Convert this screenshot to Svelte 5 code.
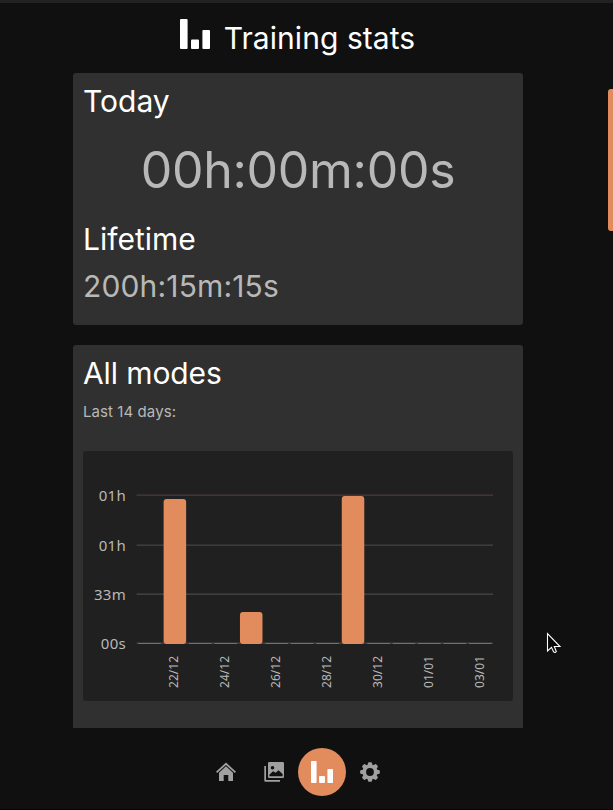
<script>
  // --- Data ---
  const today = '00h:00m:00s';
  const lifetime = '200h:15m:15s';

  // bar heights in chart px, one per day
  const days = [
    { date: '21/12', height: 0 },
    { date: '22/12', height: 145 },
    { date: '23/12', height: 0 },
    { date: '24/12', height: 0 },
    { date: '25/12', height: 32 },
    { date: '26/12', height: 0 },
    { date: '27/12', height: 0 },
    { date: '28/12', height: 0 },
    { date: '29/12', height: 148 },
    { date: '30/12', height: 0 },
    { date: '31/12', height: 0 },
    { date: '01/01', height: 0 },
    { date: '02/01', height: 0 },
    { date: '03/01', height: 0 }
  ];

  const ticks = [
    { label: '01h', y: 44, color: '#4b3a38' },
    { label: '01h', y: 94, color: '#46433f' },
    { label: '33m', y: 143, color: '#4a4744' },
    { label: '00s', y: 192, color: '#484848' }
  ];

  // --- Chart layout ---
  const left = 53.7;
  const step = 25.45;
  const baseline = 193;
  const barWidth = 22.5;

  const center = (i) => left + step * (i + 0.5);

  let page = $state('stats');
</script>

{#snippet bars()}
  <rect x="0" y="0" width="7.6" height="30" rx="1" />
  <rect x="11" y="20.5" width="8" height="9.5" rx="1" />
  <rect x="22.4" y="11" width="7.6" height="19" rx="1" />
{/snippet}

<div class="app">
  <main>
    <h1>
      <svg width="30" height="30" viewBox="0 0 30 30">{@render bars()}</svg>
      <span>Training stats</span>
    </h1>

    <section class="card totals">
      <h2>Today</h2>
      <div class="today">{today}</div>
      <h2>Lifetime</h2>
      <div class="lifetime">{lifetime}</div>
    </section>

    <section class="card modes">
      <h2>All modes</h2>
      <p>Last 14 days:</p>
      <svg class="chart" width="430" height="250" viewBox="0 0 430 250">
        {#each ticks as tick}
          <rect x="53.6" y={tick.y - 0.5} width="356.4" height="1.3" fill={tick.color} />
          <text class="tick" x="43" y={tick.y + 6} text-anchor="end">{tick.label}</text>
        {/each}
        {#each days as day, i}
          {#if day.height}
            <rect
              class="bar"
              x={center(i) - barWidth / 2}
              y={baseline - day.height}
              width={barWidth}
              height={day.height}
              rx="3"
            />
          {:else}
            <rect class="empty" x={center(i) - barWidth / 2} y={baseline - 1} width={barWidth} height="1" />
          {/if}
          {#if i % 2 === 1}
            <text class="date" transform="translate({center(i) + 3.5} 205) rotate(-90)" text-anchor="end">{day.date}</text>
          {/if}
        {/each}
      </svg>
    </section>
  </main>

  <nav>
    <button class:active={page === 'home'} onclick={() => (page = 'home')} aria-label="Home">
      <svg width="20" height="20" viewBox="0 0 20 20">
        <path d="M10 0.5 0 9.8 1.2 11 10 2.9 18.8 11 20 9.8Z" />
        <path d="M10 4.3 3 10.8V19H7.7V13H12.3V19H17V10.8Z" />
      </svg>
    </button>
    <button class:active={page === 'gallery'} onclick={() => (page = 'gallery')} aria-label="Gallery">
      <svg width="20" height="20" viewBox="0 0 20 20">
        <path d="M0.3 4H2V18H16V19.7H1.5Q0.3 19.7 0.3 18.5Z" />
        <path
          fill-rule="evenodd"
          d="M5.2 0H18.8Q20 0 20 1.2V14.8Q20 16 18.8 16H5.2Q4 16 4 14.8V1.2Q4 0 5.2 0ZM5.4 14.3H18.6V12L14.5 8.2 11.7 10.8 9 9.2 5.4 12.8ZM8.5 4A1.8 1.8 0 1 0 8.5 7.6 1.8 1.8 0 1 0 8.5 4Z"
        />
      </svg>
    </button>
    <button class:active={page === 'stats'} onclick={() => (page = 'stats')} aria-label="Stats">
      <svg width="22" height="22" viewBox="0 0 30 30">{@render bars()}</svg>
    </button>
    <button class:active={page === 'settings'} onclick={() => (page = 'settings')} aria-label="Settings">
      <svg width="20" height="20" viewBox="0 0 20 20">
        <g>
          {#each [0, 45, 90, 135] as angle}
            <rect x="7.9" y="0.2" width="4.2" height="19.6" rx="1.3" transform="rotate({angle} 10 10)" />
          {/each}
          <circle cx="10" cy="10" r="7.7" />
        </g>
        <circle class="hole" cx="10" cy="10" r="3.9" />
      </svg>
    </button>
  </nav>

  <div class="scrollbar"></div>

  <svg class="cursor" width="16" height="24" viewBox="0 0 16 24">
    <path d="M1.5 1.5V19L5.5 15.3 7.5 19.7Q9 21.5 10.3 19.5L8.3 14.5H14Z" />
  </svg>
</div>

<style>
  :global(body) {
    background: #101010;
  }
  .app {
    position: relative;
    display: flex;
    flex-direction: column;
    box-sizing: border-box;
    height: 810px;
    overflow: hidden;
    background: #101010;
    border-top: 3px solid #222;
    border-bottom: 1px solid #060606;
    color: #fff;
    font-family: Inter, sans-serif;
  }
  main {
    height: 725px;
    overflow: hidden;
    padding: 0 90px 0 73px;
  }
  h1, h2 {
    margin: 0;
    font-size: 30px;
    font-weight: 400;
    line-height: 36px;
  }
  h1 {
    display: flex;
    justify-content: center;
    gap: 14px;
    height: 53px;
    padding: 17px 1px 0 0;
    fill: #fff;
    letter-spacing: 0.06px;
  }
  h1 svg {
    margin-top: -1px;
  }
  .card {
    box-sizing: border-box;
    padding: 10px;
    background: #303030;
    border-radius: 3px;
  }
  .totals {
    height: 252px;
    margin-bottom: 20px;
  }
  .today {
    padding: 21px 0;
    color: #b8b8b8;
    font-size: 50px;
    line-height: 60px;
    letter-spacing: -0.3px;
    text-align: center;
  }
  .lifetime {
    margin-top: 11px;
    color: #b8b8b8;
    font-size: 30px;
    line-height: 36px;
    letter-spacing: 0.15px;
  }
  .modes {
    height: 420px;
  }
  .modes h2 {
    letter-spacing: -0.1px;
  }
  .modes p {
    margin: 11px 0 29px;
    color: #b8b8b8;
    font-size: 15px;
    line-height: 20px;
    letter-spacing: 0.08px;
  }
  .chart {
    display: block;
    background: #202020;
    border-radius: 3px;
  }
  .bar {
    fill: #e28c5e;
  }
  .empty {
    fill: #8a6a54;
  }
  .tick {
    fill: #b8b8b8;
    font: 15px 'Noto Sans', sans-serif;
    letter-spacing: 0.3px;
  }
  .date {
    fill: #b8b8b8;
    font: 12px 'Noto Sans', sans-serif;
  }
  nav {
    display: flex;
    justify-content: center;
    padding: 20px 17px 0 0;
  }
  button {
    display: flex;
    align-items: center;
    justify-content: center;
    width: 48px;
    height: 48px;
    padding: 0;
    background: none;
    border: none;
    border-radius: 50%;
    fill: #a0a0a0;
  }
  button.active {
    background: #e28c5e;
    fill: #fff;
  }
  .hole {
    fill: #101010;
  }
  .scrollbar {
    position: absolute;
    top: 86px;
    right: 0;
    width: 5px;
    height: 142px;
    background: #e28c5e;
    border-radius: 3px 0 0 3px;
  }
  .cursor {
    position: absolute;
    top: 629px;
    left: 546px;
    fill: #080808;
    stroke: #fff;
    stroke-width: 1.1;
  }
</style>
